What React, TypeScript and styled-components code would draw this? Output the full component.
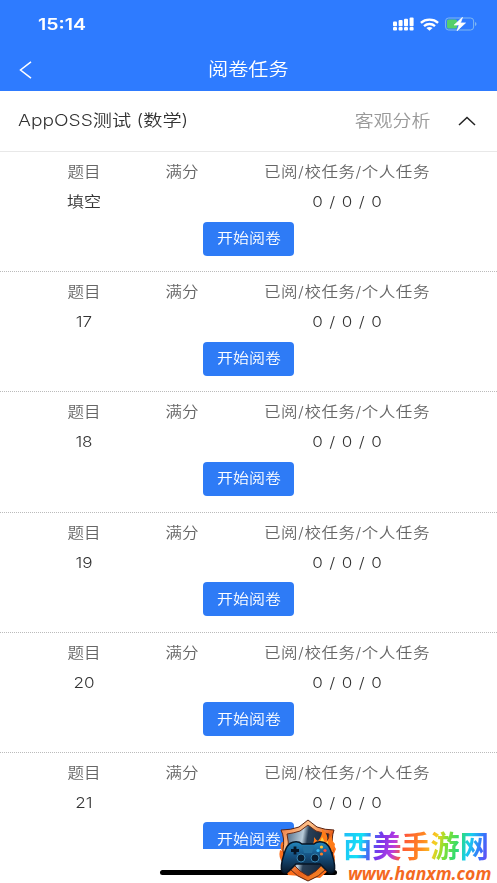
import React, {FC, ReactNode} from 'react';
import styled, {createGlobalStyle} from 'styled-components';

interface Task {
    name: string;
    score: string;
    progress: string;
}

const tasks: Task[] = ['填空', '17', '18', '19', '20', '21'].map((name) => ({
    name,
    score: '',
    progress: '0 / 0 / 0',
}));

const SignalIcon: FC = () => (
    <svg width="21" height="14" viewBox="0 0 21 14" fill="#fff">
        {[0, 5.6, 11, 16.6].map((x, i) => (
            <g key={x}>
                <rect x={x} y={4.4 - i * 1.3} width="4" height={4.8 + i * 1.3} rx="1"/>
                <rect x={x} y="10" width="4" height="3.4" rx="1"/>
            </g>
        ))}
    </svg>
);

const WifiIcon: FC = () => (
    <svg width="19" height="13" viewBox="0 0 19 13" fill="none" stroke="#fff" strokeWidth="2.4">
        <path d="M.9 4.8C5.6.6 13.4.6 18.1 4.8"/>
        <path d="M4 8.1C7.2 5.3 11.8 5.3 15 8.1"/>
        <path d="M6.4 10C8.3 8.500 10.7 8.500 12.600 10L9.500 12.800Z" fill="#fff" stroke="none"/>
    </svg>
);

const BatteryIcon: FC = () => (
    <svg width="32" height="14" viewBox="0 0 32 14">
        <rect x=".6" y="1" width="28" height="12" rx="3" fill="none" stroke="#7fb8f2" strokeWidth="1"/>
        <path d="M30 5v4q1.5-.5 1.5-2T30 5z" fill="#7fb8f2"/>
        <rect x="2" y="2.4" width="10" height="9.2" rx="1.5" fill="#55cf6c"/>
        <path d="M17.5.3 9.2 8h5L12 13.800 20.500 5.900h-5z" fill="#fff" stroke="#fff" strokeWidth=".7" strokeLinejoin="round"/>
    </svg>
);

const ShieldLogo: FC = () => (
    <svg width="60" height="65" viewBox="0 0 60 65">
        <defs>
            <linearGradient id="rim" x1="0" y1="0" x2="1" y2="1">
                <stop offset="0" stopColor="#e8622a"/>
                <stop offset=".3" stopColor="#ffc48c"/>
                <stop offset=".6" stopColor="#e9601a"/>
                <stop offset="1" stopColor="#ff9b2e"/>
            </linearGradient>
            <linearGradient id="steel" x1="0" y1="0" x2="1" y2=".2">
                <stop offset="0" stopColor="#4d6a86"/>
                <stop offset=".4" stopColor="#b8cbd9"/>
                <stop offset=".52" stopColor="#2a4057"/>
                <stop offset="1" stopColor="#14263a"/>
            </linearGradient>
            <linearGradient id="pad" x1="0" y1="0" x2="0" y2="1">
                <stop offset="0" stopColor="#2387bd"/>
                <stop offset=".45" stopColor="#155080"/>
                <stop offset="1" stopColor="#0a1a2c"/>
            </linearGradient>
        </defs>
        <path d="M4 24Q1 28 4 33L2 32Q0 40 5 45L10 57 22 58 42 60 53 50Q59 42 56 36L58 31 54 24Z" fill="#ff6f1a"/>
        <path d="M30 2 39 9Q47 12 56 12 53 20 55 32 54 54 30 63 6 54 5 32 7 20 3 12 13 12 21 9Z" fill="url(#rim)" stroke="#5a2413" strokeWidth="1"/>
        <path d="M30 7 38 13Q44 15 51 16 49 24 50 32 48 49 30 58 12 49 10 32 11 24 9 16 16 15 22 13Z" fill="url(#steel)" stroke="#6a2c18" strokeWidth="1"/>
        <path d="M32 29Q37 25 36 19 38 22 40 23 45 17 44 11 51 17 49 23L54 17Q53 22 57 26L55 34 35 33Z" fill="#ff7b18"/>
        <path d="M38 28Q42 25 44 19 47 23 46 26L50 23 50 31Z" fill="#ffcf43"/>
        <path d="M14 24.500Q20 22.500 24 26H36Q40 22.500 46 24.500 51 26 54 36 58 49 56 53 53 57 49 53L42 46H18L11 53Q7 57 4 53 2 49 6 36 9 26 14 24.500Z" fill="url(#pad)" stroke="#071525" strokeWidth="1.5"/>
        <path d="M24 28H36L34 35H26Z" fill="#236f9e"/>
        <path d="M17 28.500v8M13 32.500h8" stroke="#071525" strokeWidth="2.800"/>
        <circle cx="23" cy="40" r="4" fill="#081c30" stroke="#3382af"/>
        <circle cx="37" cy="40" r="4" fill="#081c30" stroke="#3382af"/>
        <circle cx="43.500" cy="29" r="1.600" fill="#ffc42e"/>
        <circle cx="40" cy="32.500" r="1.600" fill="#38b8f5"/>
        <circle cx="47" cy="32.500" r="1.600" fill="#ff4938"/>
        <circle cx="43.500" cy="36" r="1.600" fill="#ff7d28"/>
    </svg>
);

const Wide: FC<{children: ReactNode}> = ({children}) => <StyledWide>{children}</StyledWide>;

const Row: FC<{task: Task}> = ({task}) => (
    <StyledRow>
        <StyledColumns>
            <StyledLabel>题目</StyledLabel>
            <StyledLabel>满分</StyledLabel>
            <StyledLabel $spaced>已阅/校任务/个人任务</StyledLabel>
            <StyledValue>{task.name}</StyledValue>
            <StyledValue>{task.score}</StyledValue>
            <StyledValue $spaced>{task.progress}</StyledValue>
        </StyledColumns>
        <StyledButton><Wide>开始阅卷</Wide></StyledButton>
    </StyledRow>
);

const App: FC = () => (
    <StyledScreen>
        <GlobalStyle/>
        <StyledStatusBar>
            <StyledTime>15:14</StyledTime>
            <StyledStatusIcons>
                <SignalIcon/>
                <WifiIcon/>
                <BatteryIcon/>
            </StyledStatusIcons>
        </StyledStatusBar>
        <StyledNavBar>
            <svg width="13" height="18" viewBox="0 0 13 18" fill="none" stroke="#fff" strokeWidth="1.5">
                <path d="M12 .8 1.5 9 12 17.2"/>
            </svg>
            <StyledTitle><Wide>阅卷任务</Wide></StyledTitle>
        </StyledNavBar>
        <StyledExam>
            <StyledExamName>AppOSS测试 (数学)</StyledExamName>
            <StyledAnalysis>客观分析</StyledAnalysis>
            <svg width="18" height="10" viewBox="0 0 18 10" fill="none" stroke="#222" strokeWidth="1.5">
                <path d="M1 9 9 1.5 17 9"/>
            </svg>
        </StyledExam>
        <StyledList>
            {tasks.map((task) => <Row key={task.name} task={task}/>)}
        </StyledList>
        <StyledHome/>
        <StyledWatermark>
            <ShieldLogo/>
            <StyledBrand>
                <StyledBrandName>西美手游网</StyledBrandName>
                <StyledBrandUrl>www.hanxm.com</StyledBrandUrl>
            </StyledBrand>
        </StyledWatermark>
    </StyledScreen>
);

const GlobalStyle = createGlobalStyle`
  body {
    margin: 0;
    background: #fff;
  }
  * {
    box-sizing: border-box;
  }
  svg {
    display: block;
    flex: none;
  }
`;

const StyledScreen = styled.div`
  position: relative;
  display: flex;
  flex-direction: column;
  width: 497px;
  height: 883px;
  overflow: hidden;
  background: #fff;
  color: #333;
  font-family: Inter, "Noto Sans CJK SC", sans-serif;
  font-weight: 350;
  white-space: nowrap;
`;

const StyledWide = styled.span`
  display: inline-block;
  transform: scaleX(1.14);
`;

const StyledStatusBar = styled.div`
  display: flex;
  justify-content: space-between;
  align-items: center;
  height: 48px;
  padding: 0 20px 0 38px;
  background: #2e7bff;
`;

const StyledTime = styled.div`
  color: #fff;
  font-size: 16px;
  font-weight: 600;
  transform: scaleX(1.22);
  transform-origin: left;
`;

const StyledStatusIcons = styled.div`
  display: flex;
  align-items: center;
  gap: 6px;
`;

const StyledNavBar = styled.div`
  display: flex;
  align-items: center;
  height: 43px;
  padding: 0 38px 0 19px;
  background: #2e7bff;
  color: #fff;
`;

const StyledTitle = styled.div`
  flex: 1;
  padding: 0 0 3px 6px;
  text-align: center;
  font-size: 17.7px;
`;

const StyledExam = styled.div`
  display: flex;
  align-items: center;
  height: 60px;
  padding: 0 21px 0 18px;
`;

const StyledExamName = styled.div`
  flex: 1;
  padding-bottom: 4px;
  font-size: 16.4px;
  transform: scaleX(1.17);
  transform-origin: left;
`;

const StyledAnalysis = styled.div`
  margin-right: 28px;
  padding-bottom: 2px;
  color: #999;
  font-size: 16.6px;
  transform: scaleX(1.14);
  transform-origin: right;
`;

const StyledList = styled.div`
  height: 698px;
  overflow: hidden;
`;

const StyledRow = styled.div`
  display: flex;
  flex-direction: column;
  align-items: center;
  height: 120.2px;
  padding-top: 5px;
  border-top: 1px dotted #bbb;
  &:first-child {
    border-top: 1px solid #e8e8e8;
  }
`;

const StyledColumns = styled.div`
  display: grid;
  grid-template-columns: 98px 98px 232px;
  grid-template-rows: 30px 30px;
  width: 100%;
  padding-left: 35px;
`;

const StyledLabel = styled.div<{$spaced?: boolean}>`
  color: #666;
  font-size: 14.5px;
  line-height: 30px;
  text-align: center;
  letter-spacing: ${({$spaced}) => ($spaced ? '0.45px' : '0')};
  transform: scaleX(1.14);
`;

const StyledValue = styled.div<{$spaced?: boolean}>`
  font-size: 14.5px;
  line-height: 29px;
  text-align: center;
  word-spacing: ${({$spaced}) => ($spaced ? '1.4px' : '0')};
  transform: scaleX(1.18);
`;

const StyledButton = styled.button`
  width: 91px;
  height: 34px;
  margin-top: 4.5px;
  padding: 0 0 3px;
  border: none;
  border-radius: 4px;
  background: #2e7bf6;
  color: #fff;
  font: inherit;
  font-size: 14px;
  cursor: pointer;
`;

const StyledHome = styled.div`
  width: 177px;
  height: 5px;
  margin: 21px 0 0 160px;
  border-radius: 3px;
  background: #000;
`;

// Site mark that floats over the bottom of the list
const StyledWatermark = styled.div`
  position: absolute;
  right: 0;
  bottom: 0;
  display: flex;
  width: 219px;
  height: 65px;
`;

const StyledBrand = styled.div`
  padding: 8px 0 0 5px;
`;

const StyledBrandName = styled.div`
  width: 146px;
  background: linear-gradient(105deg, #22b8f8 0%, #14e0f4 14%, #3f74f5 20%, #7a35ea 27%, #b93ce0 36%, #ff5a35 42%, #ff8a20 54%, #f5d022 62%, #8ee02c 68%, #2fdc70 77%, #18cdef 84%, #3573fb 92%, #7a3ef0 100%);
  background-clip: text;
  color: transparent;
  font-family: "Noto Sans CJK SC", sans-serif;
  font-size: 29.2px;
  font-weight: 700;
  line-height: 37px;
`;

const StyledBrandUrl = styled.div`
  padding-left: 5px;
  color: #f4691f;
  font-family: "Open Sans", sans-serif;
  font-size: 17.6px;
  font-style: italic;
  font-weight: 700;
  line-height: 20px;
`;

export default App;
